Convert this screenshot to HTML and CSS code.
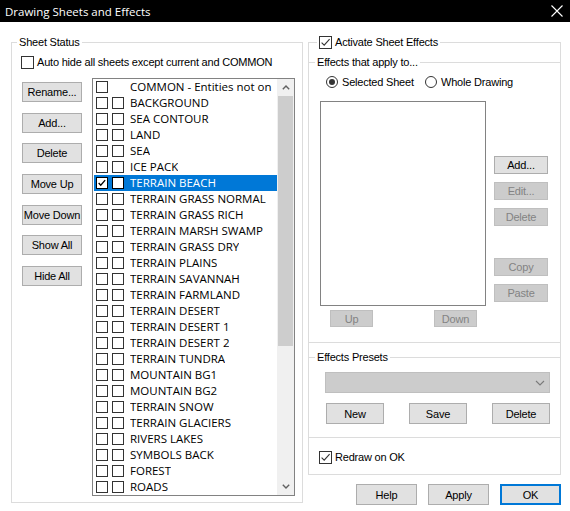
FILE: index.html
```html
<!DOCTYPE html>
<html>
<head>
<meta charset="utf-8">
<title>Drawing Sheets and Effects</title>
<link rel="stylesheet" href="styles.css">
</head>
<body>
<div class="window">
  <div class="titlebar">
    <span class="title">Drawing Sheets and Effects</span>
    <svg class="close" width="12" height="12" viewBox="0 0 12 12"><path d="M0.5 0.5L11.5 11.5M11.5 0.5L0.5 11.5" stroke="#fff" stroke-width="1.1" fill="none"/></svg>
  </div>
  <div class="client">
    <fieldset class="group sheet-status">
      <legend class="legend">Sheet Status</legend>
      <label class="check auto-hide"><span class="box"></span><span class="check-text">Auto hide all sheets except current and COMMON</span></label>
      <div class="sheet-row">
        <div class="btn-col">
          <button class="btn side">Rename...</button>
          <button class="btn side">Add...</button>
          <button class="btn side">Delete</button>
          <button class="btn side">Move Up</button>
          <button class="btn side">Move Down</button>
          <button class="btn side">Show All</button>
          <button class="btn side">Hide All</button>
        </div>
        <div class="sheet-list">
          <ul class="rows">
            <li class="row"><span class="cb"></span><span class="cb hidden"></span><span class="name">COMMON - Entities not on</span></li>
            <li class="row"><span class="cb"></span><span class="cb"></span><span class="name">BACKGROUND</span></li>
            <li class="row"><span class="cb"></span><span class="cb"></span><span class="name">SEA CONTOUR</span></li>
            <li class="row"><span class="cb"></span><span class="cb"></span><span class="name">LAND</span></li>
            <li class="row"><span class="cb"></span><span class="cb"></span><span class="name">SEA</span></li>
            <li class="row"><span class="cb"></span><span class="cb"></span><span class="name">ICE PACK</span></li>
            <li class="row selected"><span class="cb"><svg width="12" height="12" viewBox="0 0 12 12"><path d="M2 6L4.5 8.6L9.8 2.6" stroke="#000" stroke-width="1.6" fill="none"/></svg></span><span class="cb"></span><span class="name">TERRAIN BEACH</span></li>
            <li class="row"><span class="cb"></span><span class="cb"></span><span class="name">TERRAIN GRASS NORMAL</span></li>
            <li class="row"><span class="cb"></span><span class="cb"></span><span class="name">TERRAIN GRASS RICH</span></li>
            <li class="row"><span class="cb"></span><span class="cb"></span><span class="name">TERRAIN MARSH SWAMP</span></li>
            <li class="row"><span class="cb"></span><span class="cb"></span><span class="name">TERRAIN GRASS DRY</span></li>
            <li class="row"><span class="cb"></span><span class="cb"></span><span class="name">TERRAIN PLAINS</span></li>
            <li class="row"><span class="cb"></span><span class="cb"></span><span class="name">TERRAIN SAVANNAH</span></li>
            <li class="row"><span class="cb"></span><span class="cb"></span><span class="name">TERRAIN FARMLAND</span></li>
            <li class="row"><span class="cb"></span><span class="cb"></span><span class="name">TERRAIN DESERT</span></li>
            <li class="row"><span class="cb"></span><span class="cb"></span><span class="name">TERRAIN DESERT 1</span></li>
            <li class="row"><span class="cb"></span><span class="cb"></span><span class="name">TERRAIN DESERT 2</span></li>
            <li class="row"><span class="cb"></span><span class="cb"></span><span class="name">TERRAIN TUNDRA</span></li>
            <li class="row"><span class="cb"></span><span class="cb"></span><span class="name">MOUNTAIN BG1</span></li>
            <li class="row"><span class="cb"></span><span class="cb"></span><span class="name">MOUNTAIN BG2</span></li>
            <li class="row"><span class="cb"></span><span class="cb"></span><span class="name">TERRAIN SNOW</span></li>
            <li class="row"><span class="cb"></span><span class="cb"></span><span class="name">TERRAIN GLACIERS</span></li>
            <li class="row"><span class="cb"></span><span class="cb"></span><span class="name">RIVERS LAKES</span></li>
            <li class="row"><span class="cb"></span><span class="cb"></span><span class="name">SYMBOLS BACK</span></li>
            <li class="row"><span class="cb"></span><span class="cb"></span><span class="name">FOREST</span></li>
            <li class="row"><span class="cb"></span><span class="cb"></span><span class="name">ROADS</span></li>
          </ul>
          <div class="vscroll">
            <span class="arrow"><svg width="8" height="5" viewBox="0 0 8 5"><path d="M0.8 4.3L4 1.1L7.2 4.3" stroke="#606060" stroke-width="1.4" fill="none"/></svg></span>
            <span class="track"><span class="thumb"></span></span>
            <span class="arrow"><svg width="8" height="5" viewBox="0 0 8 5"><path d="M0.8 0.7L4 3.9L7.2 0.7" stroke="#606060" stroke-width="1.4" fill="none"/></svg></span>
          </div>
        </div>
      </div>
    </fieldset>

    <div class="right-col">
      <fieldset class="group effects">
        <legend class="legend legend-check"><span class="box checked"><svg width="11" height="11" viewBox="0 0 11 11"><path d="M1.6 5.6L4.2 8.2L9.6 2.2" stroke="#333" stroke-width="1.1" fill="none"/></svg></span><span class="check-text">Activate Sheet Effects</span></legend>

        <fieldset class="sub apply">
          <legend class="legend sub-legend">Effects that apply to...</legend>
          <div class="radio-row">
            <label class="radio first"><span class="dot on"></span><span>Selected Sheet</span></label>
            <label class="radio"><span class="dot"></span><span>Whole Drawing</span></label>
          </div>
          <div class="apply-body">
            <div class="effects-left">
              <div class="effects-list"></div>
              <div class="updown">
                <button class="btn disabled up">Up</button>
                <button class="btn disabled down">Down</button>
              </div>
            </div>
            <div class="effects-btns">
              <button class="btn small">Add...</button>
              <button class="btn small disabled">Edit...</button>
              <button class="btn small disabled">Delete</button>
              <button class="btn small disabled copy">Copy</button>
              <button class="btn small disabled">Paste</button>
            </div>
          </div>
        </fieldset>

        <fieldset class="sub presets">
          <legend class="legend sub-legend">Effects Presets</legend>
          <div class="combo"><svg width="10" height="6" viewBox="0 0 10 6"><path d="M1 1L5 5L9 1" stroke="#7a7a7a" stroke-width="1.1" fill="none"/></svg></div>
          <div class="preset-btns">
            <button class="btn">New</button>
            <button class="btn">Save</button>
            <button class="btn">Delete</button>
          </div>
        </fieldset>

        <label class="check redraw"><span class="box checked"><svg width="11" height="11" viewBox="0 0 11 11"><path d="M1.6 5.6L4.2 8.2L9.6 2.2" stroke="#333" stroke-width="1.1" fill="none"/></svg></span><span class="check-text">Redraw on OK</span></label>
      </fieldset>

      <div class="dialog-btns">
        <button class="btn dlg">Help</button>
        <button class="btn dlg">Apply</button>
        <button class="btn dlg default">OK</button>
      </div>
    </div>
  </div>
</div>
</body>
</html>
```

FILE: styles.css
```css
* { box-sizing: border-box; }
html, body { margin: 0; padding: 0; }
body {
  width: 570px;
  height: 511px;
  overflow: hidden;
  background: #fff;
  font-family: "Liberation Sans", Arial, sans-serif;
  font-size: 11px;
  letter-spacing: -0.2px;
  color: #000;
}
.window {
  width: 570px;
  height: 511px;
  background: #fff;
  display: flex;
  flex-direction: column;
}
.titlebar {
  flex: none;
  height: 22px;
  background: #000;
  color: #fff;
  display: flex;
  align-items: center;
  justify-content: space-between;
  padding: 0 7px 0 5px;
}
.title {
  font-family: "Open Sans", "Noto Sans", sans-serif;
  font-size: 11.5px;
  letter-spacing: 0;
}
.client {
  display: flex;
  align-items: flex-start;
  padding-left: 11px;
}

/* group boxes */
.group {
  margin: 0;
  padding: 0;
  border: 1px solid #dcdcdc;
  min-width: 0;
}
.legend {
  padding: 0 2px;
  height: 14px;
  line-height: 14px;
}
.sheet-status {
  width: 292px;
  margin-top: 13px;
  padding-bottom: 6px;
}
.sheet-status > .legend { margin-left: 5px; }

/* checkboxes */
.check {
  display: flex;
  align-items: center;
  height: 13px;
}
.box {
  flex: none;
  width: 13px;
  height: 13px;
  border: 1px solid #333;
  background: #fff;
  display: flex;
  align-items: center;
  justify-content: center;
}
.check-text { margin-left: 3px; line-height: 13px; white-space: nowrap; }
.auto-hide { margin: 7px 0 0 9px; }

.sheet-row {
  display: flex;
  margin-top: 9px;
}
.btn-col {
  display: flex;
  flex-direction: column;
  gap: 10.7px;
  padding-top: 4px;
  margin-left: 10px;
  width: 60px;
}
.btn {
  font-family: "Liberation Sans", Arial, sans-serif;
  font-size: 11px;
  letter-spacing: -0.2px;
  white-space: nowrap;
  color: #000;
  background: #e1e1e1;
  border: 1px solid #adadad;
  padding: 0;
  margin: 0;
  display: flex;
  align-items: center;
  justify-content: center;
}
.btn.side { height: 20px; width: 60px; }
.btn.disabled {
  background: #cccccc;
  border-color: #bfbfbf;
  color: #838383;
}

/* sheets list */
.sheet-list {
  margin-left: 10px;
  width: 203px;
  height: 418px;
  border: 1px solid #828282;
  display: flex;
  background: #fff;
}
.rows {
  list-style: none;
  margin: 0;
  padding: 0;
  width: 184px;
  overflow: hidden;
}
.row {
  height: 16px;
  display: flex;
  align-items: center;
  margin-left: 1px;
  padding-left: 2px;
  font-family: "Open Sans", "Noto Sans", sans-serif;
  font-size: 11.5px;
  letter-spacing: 0;
  white-space: nowrap;
}
.row.selected { background: #0078d7; color: #fff; }
.cb {
  flex: none;
  width: 12px;
  height: 12px;
  border: 1px solid #333;
  background: #fff;
  margin-right: 4px;
  display: flex;
  align-items: center;
  justify-content: center;
}
.cb svg { display: block; }
.row.selected .cb { border-color: #000; }
.cb.hidden { visibility: hidden; }
.name { margin-left: 2px; line-height: 16px; overflow: hidden; }

.vscroll {
  width: 17px;
  background: #f0f0f0;
  display: flex;
  flex-direction: column;
}
.arrow {
  height: 17px;
  display: flex;
  align-items: center;
  justify-content: center;
}
.track { flex: 1; padding: 0 1px; }
.thumb {
  display: block;
  height: 250px;
  background: #cdcdcd;
}

/* right column */
.right-col {
  width: 253px;
  margin-left: 5px;
  display: flex;
  flex-direction: column;
}
.effects {
  margin-top: 13px;
  padding-bottom: 10px;
}
.legend-check {
  margin-left: 8px;
  display: flex;
  align-items: center;
}
.sub {
  margin: 0;
  padding: 0;
  border: 0;
  border-top: 1px solid #dcdcdc;
  border-bottom: 1px solid #dcdcdc;
  min-width: 0;
}
.sub-legend { margin-left: 6px; }
.apply { margin-top: 6px; padding-bottom: 15px; }

.radio-row {
  display: flex;
  align-items: center;
  height: 14px;
  margin-top: 6px;
  padding-left: 17px;
}
.radio { display: flex; align-items: center; white-space: nowrap; }
.radio.first { width: 99px; }
.dot {
  flex: none;
  width: 12px;
  height: 12px;
  border: 1px solid #333;
  border-radius: 50%;
  margin-right: 4px;
  display: flex;
  align-items: center;
  justify-content: center;
}
.dot.on::after {
  content: "";
  width: 6px;
  height: 6px;
  border-radius: 50%;
  background: #333;
}

.apply-body {
  display: flex;
  margin-top: 12px;
  padding-left: 11px;
}
.effects-left { width: 166px; display: flex; flex-direction: column; }
.effects-list {
  height: 205px;
  border: 1px solid #828282;
  background: #fff;
}
.updown { display: flex; margin-top: 4px; }
.btn.up, .btn.down { width: 43px; height: 17px; }
.btn.up { margin-left: 10px; }
.btn.down { margin-left: 61px; }

.effects-btns {
  margin-left: 8px;
  width: 54px;
  display: flex;
  flex-direction: column;
  gap: 8px;
  padding-top: 55px;
}
.btn.small { width: 54px; height: 18px; }
.btn.small.copy { margin-top: 24px; }

.presets { margin-top: 7px; padding-bottom: 13px; }
.combo {
  margin: 8px 0 0 16px;
  width: 225px;
  height: 21px;
  background: #cccccc;
  border: 1px solid #bfbfbf;
  display: flex;
  align-items: center;
  justify-content: flex-end;
  padding-right: 4px;
}
.preset-btns {
  display: grid;
  grid-template-columns: 58px 58px 58px;
  justify-content: space-between;
  margin-top: 10px;
  padding: 0 10px 0 17px;
}
.preset-btns .btn { height: 21px; }

.redraw { margin: 13px 0 0 10px; }

.dialog-btns {
  display: flex;
  justify-content: flex-end;
  gap: 11px;
  margin-top: 9px;
}
.btn.dlg { width: 61px; height: 21px; }
.btn.default { border: 2px solid #0078d7; }
```
